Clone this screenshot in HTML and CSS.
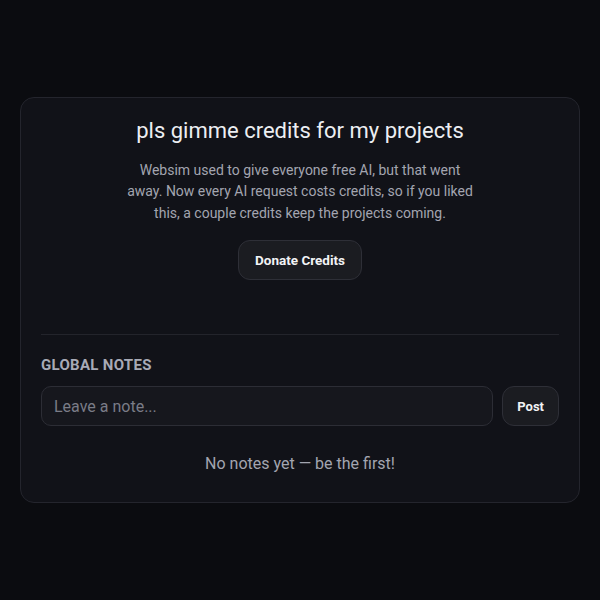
FILE: index.html
```html
<!DOCTYPE html>
<html>
<head>
<meta charset="utf-8">
<link rel="stylesheet" href="styles.css">
</head>
<body>
<main class="card">
  <section class="donate">
    <h1 class="title">pls gimme credits for my projects</h1>
    <p class="desc">Websim used to give everyone free AI, but that went away. Now every AI request costs credits, so if you liked this, a couple credits keep the projects coming.</p>
    <button class="btn donate-btn">Donate Credits</button>
  </section>
  <hr class="sep">
  <section class="notes">
    <h2 class="notes-title">GLOBAL NOTES</h2>
    <div class="note-form">
      <input class="note-input" type="text" placeholder="Leave a note...">
      <button class="btn post-btn">Post</button>
    </div>
    <p class="empty">No notes yet — be the first!</p>
  </section>
</main>
</body>
</html>
```
FILE: styles.css
```css
html, body {
  margin: 0;
  padding: 0;
  background: #0b0c10;
}
body {
  min-height: 100vh;
  display: flex;
  align-items: center;
  justify-content: center;
  font-family: Roboto, "Liberation Sans", sans-serif;
  color: #e6e7ec;
}
.card {
  box-sizing: border-box;
  width: 560px;
  background: #111218;
  border: 1px solid #24252d;
  border-radius: 14px;
  padding: 18px 20px 26px;
}
.donate {
  display: flex;
  flex-direction: column;
  align-items: center;
  text-align: center;
  padding-bottom: 54px;
}
.title {
  margin: 0;
  font-size: 22px;
  line-height: 30px;
  font-weight: 400;
  color: #eceef2;
}
.desc {
  margin: 14px 0 16px;
  max-width: 350px;
  font-size: 14px;
  line-height: 21.5px;
  color: #a3a5b0;
}
.btn {
  font-family: Roboto, "Liberation Sans", sans-serif;
  font-weight: 700;
  font-size: 13.5px;
  color: #f2f3f5;
  background: #1b1c21;
  border: 1px solid #2e2f37;
  border-radius: 12px;
  height: 40px;
  cursor: pointer;
}
.donate-btn {
  padding: 0 16px;
}
.sep {
  margin: 0;
  border: 0;
  height: 1px;
  background: #23242b;
}
.notes {
  padding-top: 20px;
}
.notes-title {
  margin: 0 0 11px;
  font-size: 15px;
  line-height: 20px;
  font-weight: 700;
  letter-spacing: 0.3px;
  color: #a8aab6;
}
.note-form {
  display: flex;
  gap: 9px;
}
.note-input {
  flex: 1;
  min-width: 0;
  box-sizing: border-box;
  height: 40px;
  padding: 0 12px;
  background: #16171d;
  border: 1px solid #2c2d35;
  border-radius: 10px;
  font-family: Roboto, "Liberation Sans", sans-serif;
  font-size: 16px;
  color: #e6e7ec;
  outline: none;
}
.note-input::placeholder {
  color: #7a7c87;
}
.post-btn {
  padding: 0 14px;
  font-size: 13px;
}
.empty {
  margin: 26px 0 0;
  text-align: center;
  font-size: 16px;
  line-height: 24px;
  color: #a3a5b0;
}
```
